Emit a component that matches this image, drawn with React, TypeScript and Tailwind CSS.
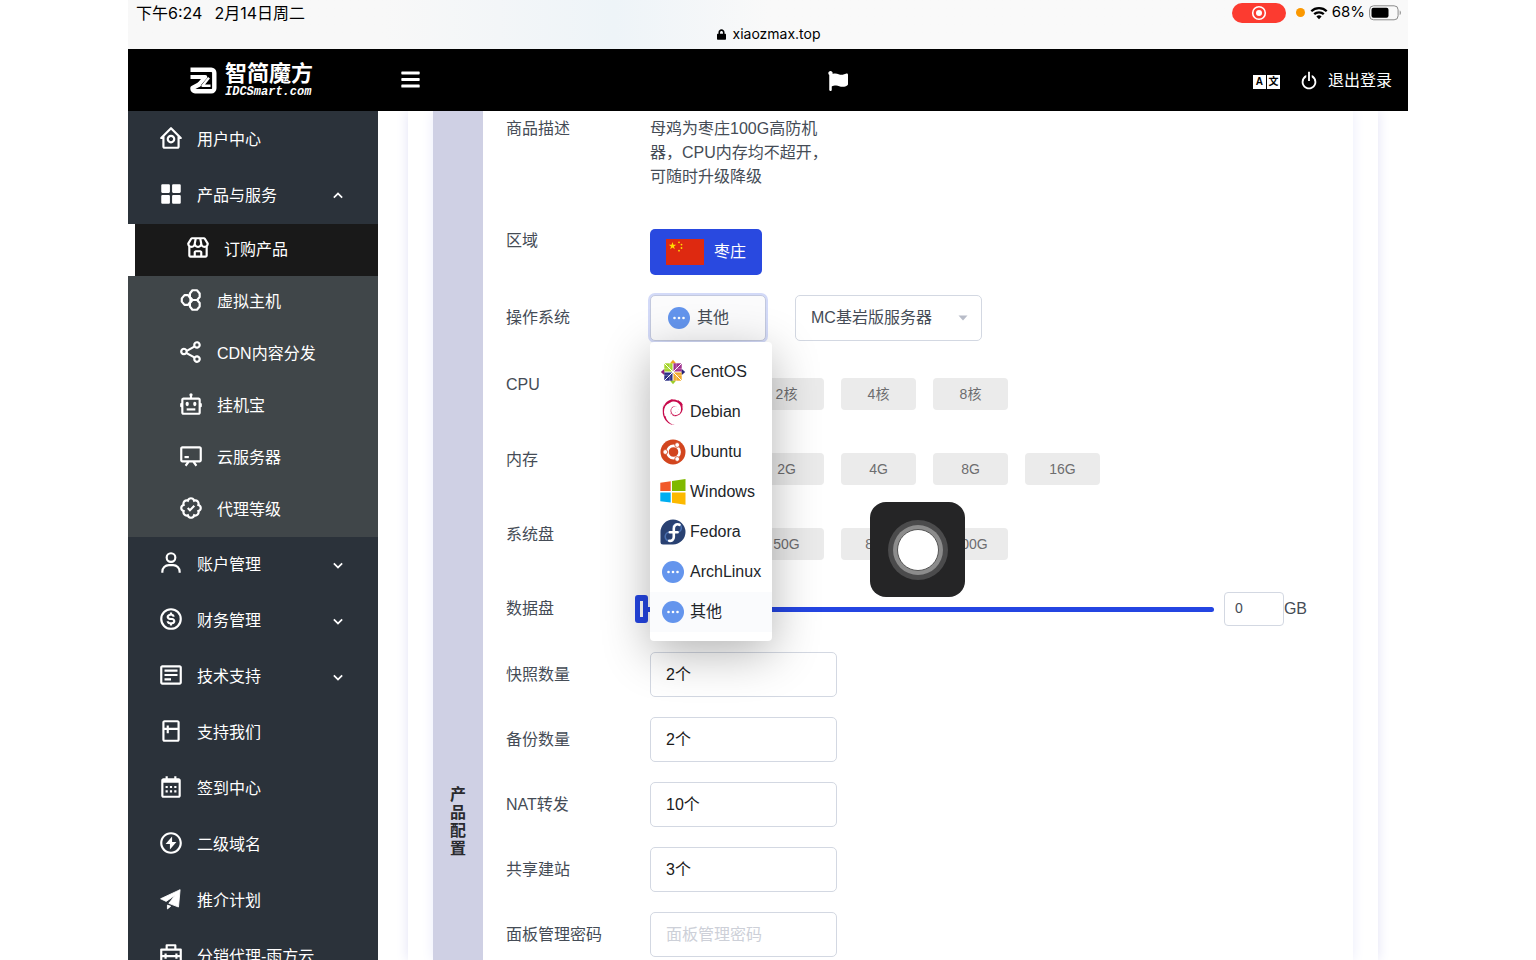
import React from 'react';
import {
  BiBadgeCheck,
  BiBoltCircle,
  BiBot,
  BiCalendar,
  BiChalkboard,
  BiChevronDown,
  BiChevronUp,
  BiDetail,
  BiDollarCircle,
  BiFridge,
  BiHomeCircle,
  BiPowerOff,
  BiShareAlt,
  BiSolidGridAlt,
  BiStore,
  BiUser,
} from 'react-icons/bi';
import { FaBars, FaLock, FaFlag } from 'react-icons/fa';
import { SiDebian } from 'react-icons/si';

const fontStack = "font-['Liberation_Sans','Noto_Sans_CJK_SC',sans-serif]";

function HiveIcon({ className }: { className?: string }) {
  return (
    <svg viewBox="0 0 24 24" className={className} fill="none" stroke="currentColor" strokeWidth="2" strokeLinejoin="round">
      <path d="M13.300 3h4.200L20 6v3.200L17.600 12h-4.200L11 9.200V6z" />
      <path d="M13.400 12h4.200L20 14.800V18l-2.500 3h-4.200L11 18v-3.200z" />
      <path d="M6 7.500h3.300L11.500 10.500v3l-2.200 3H6L3.500 13.500v-3z" />
    </svg>
  );
}

function PlaneIcon({ className }: { className?: string }) {
  return (
    <svg viewBox="0 0 24 24" className={className} fill="currentColor" stroke="currentColor" strokeWidth=".8" strokeLinejoin="round">
      <path d="M2.400 11.800L20.400 3.400 18.900 19.400 10 16l5.800-7.400-8.300 5.600z" />
      <path d="M8.700 17.600v3.600l3-2.500z" />
    </svg>
  );
}

function BriefcaseIcon({ className }: { className?: string }) {
  return (
    <svg viewBox="0 0 24 24" className={className} fill="none" stroke="currentColor" strokeWidth="2" strokeLinejoin="round">
      <path d="M3 7h18v13H3zM8 7V3h8v4M3 13h18M7 10.500v5M17 10.500v5" />
    </svg>
  );
}

function LogoMark() {
  return (
    <svg viewBox="0 0 27 27" className="w-[27px] h-[27px]" fill="none" stroke="#fff" strokeLinejoin="round">
      <path d="M.5 2.700h20.800a3 3 0 0 1 3 3v15.600a3 3 0 0 1-3 3H5a2.500 2.500 0 0 1-2.500-2.500v-.8l7.500-4" strokeWidth="4.400" />
      <path d="M.5 10h14.800L8 18.500" strokeWidth="4" />
      <path d="M20.500 18.700h-8l6.500-8" strokeWidth="2.400" />
    </svg>
  );
}

function CentosIcon() {
  return (
    <svg viewBox="0 0 26 26" className="w-[26px] h-[26px] shrink-0">
      <path d="M13 .8l3.200 3.700h-6.400z" fill="#efa724" />
      <path d="M25.200 13l-3.700 3.200V9.800z" fill="#262577" />
      <path d="M13 25.200l-3.200-3.700h6.400z" fill="#9ccd2a" />
      <path d="M.8 13l3.700-3.200v6.400z" fill="#932279" />
      <path d="M4.300 4.300h8.200v8.200H4.300z" fill="#a5d52a" />
      <path d="M13.500 4.300h8.200v8.200h-8.200z" fill="#a0308f" />
      <path d="M4.300 13.500h8.200v8.200H4.300z" fill="#2c2f86" />
      <path d="M13.500 13.500h8.200v8.200h-8.200z" fill="#f0a92b" />
      <path d="M4 4l18 18M22 4L4 22" stroke="#fff" strokeWidth="1" />
      <path d="M9.800 4v5.800H4M16.200 4v5.800H22M9.800 22v-5.800H4M16.200 22v-5.800H22" stroke="#fff" strokeOpacity=".45" fill="none" strokeWidth=".7" />
    </svg>
  );
}

function UbuntuIcon() {
  return (
    <svg viewBox="0 0 26 26" className="w-[26px] h-[26px] shrink-0">
      <circle cx="13" cy="13" r="12.500" fill="#d2451e" />
      <circle cx="13.500" cy="13" r="6.100" fill="none" stroke="#fff" strokeWidth="2.600" />
      <circle cx="5.300" cy="13" r="2.400" fill="#fff" stroke="#d2451e" strokeWidth=".8" />
      <circle cx="17.200" cy="6" r="2.400" fill="#fff" stroke="#d2451e" strokeWidth=".8" />
      <circle cx="17.200" cy="20" r="2.400" fill="#fff" stroke="#d2451e" strokeWidth=".8" />
    </svg>
  );
}

function WindowsIcon() {
  return (
    <svg viewBox="0 0 26 26" className="w-[26px] h-[26px] shrink-0">
      <path d="M0.300 3.700L10.700 2.200v9.900H0.300z" fill="#f1592a" />
      <path d="M12 2L25.500 0v12.100H12z" fill="#80b900" />
      <path d="M0.300 13.400h10.400v10.200L0.300 22.200z" fill="#00aef0" />
      <path d="M12 13.400h13.500v12.400L12 23.800z" fill="#fcb900" />
    </svg>
  );
}

function FedoraIcon() {
  return (
    <svg viewBox="0 0 26 26" className="w-[26px] h-[26px] shrink-0">
      <path d="M13 .5A12.500 12.500 0 0 0 .5 13v10a2.500 2.500 0 0 0 2.500 2.500h10A12.500 12.500 0 0 0 13 .5z" fill="#294172" />
      <path d="M12 13.300H9.500a4.300 4.300 0 1 0 4.300 4.400v-4.400h3a4.300 4.300 0 1 0-4-5" fill="none" stroke="#4a70b0" strokeWidth="1.600" />
      <path d="M19.500 5.800c-2.800-1.300-5.700 0-5.700 3.600v8.600c0 2.800-2.200 4.200-4.600 3.800M9.800 13.300h7.800" fill="none" stroke="#fff" strokeWidth="2.600" strokeLinecap="round" />
    </svg>
  );
}

function DotsIcon() {
  return (
    <svg viewBox="0 0 26 26" className="w-[26px] h-[26px] shrink-0">
      <circle cx="13" cy="13" r="11" fill="#6495ed" />
      <circle cx="8.500" cy="13" r="1.300" fill="#fff" />
      <circle cx="13" cy="13" r="1.300" fill="#fff" />
      <circle cx="17.500" cy="13" r="1.300" fill="#fff" />
    </svg>
  );
}

function FlagCN() {
  const star = 'M0-3l.7 2.100h2.200L1.100.4l.7 2.100L0 1.200l-1.800 1.300.7-2.100-1.800-1.300h2.200z';
  return (
    <svg viewBox="0 0 38 26" className="w-[38px] h-[26px]">
      <path d="M0 0h38v26H0z" fill="#de2910" />
      <g fill="#ffde00">
        <path d={star} transform="translate(6.500 7) scale(1.300)" />
        <circle cx="13" cy="3.300" r=".9" />
        <circle cx="15.500" cy="5.600" r=".9" />
        <circle cx="15.500" cy="9" r=".9" />
        <circle cx="13" cy="11.700" r=".9" />
      </g>
    </svg>
  );
}

const subMenu = [
  { label: '订购产品', icon: BiStore, active: true },
  { label: '虚拟主机', icon: HiveIcon },
  { label: 'CDN内容分发', icon: BiShareAlt },
  { label: '挂机宝', icon: BiBot },
  { label: '云服务器', icon: BiChalkboard },
  { label: '代理等级', icon: BiBadgeCheck },
];

const mainMenu = [
  { label: '账户管理', icon: BiUser, more: true },
  { label: '财务管理', icon: BiDollarCircle, more: true },
  { label: '技术支持', icon: BiDetail, more: true },
  { label: '支持我们', icon: BiFridge },
  { label: '签到中心', icon: BiCalendar },
  { label: '二级域名', icon: BiBoltCircle },
  { label: '推介计划', icon: PlaneIcon },
  { label: '分销代理-雨方云', icon: BriefcaseIcon },
];

const systems = [
  { label: 'CentOS', icon: <CentosIcon /> },
  { label: 'Debian', icon: <SiDebian className="w-[26px] h-[26px] shrink-0 text-[#c70a4b]" /> },
  { label: 'Ubuntu', icon: <UbuntuIcon /> },
  { label: 'Windows', icon: <WindowsIcon /> },
  { label: 'Fedora', icon: <FedoraIcon /> },
  { label: 'ArchLinux', icon: <DotsIcon /> },
  { label: '其他', icon: <DotsIcon />, active: true },
];

const options = [
  { label: 'CPU', values: ['1核', '2核', '4核', '8核'] },
  { label: '内存', values: ['1G', '2G', '4G', '8G', '16G'] },
  { label: '系统盘', values: ['30G', '50G', '80G', '100G'] },
];

const fields = [
  { id: 'snapshot', label: '快照数量', value: '2个' },
  { id: 'backup', label: '备份数量', value: '2个' },
  { id: 'nat', label: 'NAT转发', value: '10个' },
  { id: 'site', label: '共享建站', value: '3个' },
];

function StatusBar() {
  return (
    <div className="h-[49px] shrink-0 bg-linear-to-r from-[#f8f8f8] from-20% via-[#eef4f8] via-38% to-[#f9f9f9] to-50% text-black font-[Inter,'Noto_Sans_CJK_SC',sans-serif]">
      <div className="flex h-[25px] items-center justify-between pl-2 pr-[6px] text-[15px]">
        <div className="flex gap-3 text-base">
          <span>下午6:24</span>
          <span>2月14日周二</span>
        </div>
        <div className="flex items-center">
          <span className="flex h-5 w-[54px] items-center justify-center rounded-full bg-[#fc3b30]">
            <svg viewBox="0 0 16 16" className="w-4 h-4" fill="none" stroke="#fff">
              <circle cx="8" cy="8" r="6.300" strokeWidth="1.600" />
              <circle cx="8" cy="8" r="3" fill="#fff" stroke="none" />
            </svg>
          </span>
          <span className="ml-[10px] h-[9px] w-[9px] rounded-full bg-[#fb9800]" />
          <svg viewBox="0 0 18 14" className="ml-[5px] w-[18px] h-[14px]" fill="none" stroke="#000" strokeWidth="2.300">
            <path d="M1.300 5.200a11 11 0 0 1 15.400 0M4.200 8.200a7 7 0 0 1 9.600 0" />
            <path d="M9 13.200l-2.600-2.700a3.900 3.900 0 0 1 5.200 0z" fill="#000" stroke="none" />
          </svg>
          <span className="ml-1">68%</span>
          <svg viewBox="0 0 33 16" className="ml-1 w-[33px] h-4">
            <rect x=".6" y=".8" width="28.500" height="14" rx="4" fill="none" stroke="#8b8b8b" />
            <rect x="2.500" y="2.800" width="17" height="10" rx="2" fill="#000" />
            <path d="M30.700 5.500v4.600c1.600-.6 1.600-4 0-4.600z" fill="#8b8b8b" />
          </svg>
        </div>
      </div>
      <div className="flex h-[18px] items-center justify-center gap-[6px] pl-[2px] text-sm">
        <FaLock className="h-[11px] w-[9px]" />
        <span>xiaozmax.top</span>
      </div>
    </div>
  );
}

function TopBar() {
  return (
    <header className="flex h-[62px] shrink-0 items-center bg-black pl-[62px] pr-4 text-white">
      <a href="#" className="flex items-center gap-2">
        <LogoMark />
        <span className="flex flex-col">
          <span className="text-[22px] leading-6 font-bold">智简魔方</span>
          <span className="font-['Liberation_Mono',monospace] text-xs leading-3 font-bold italic">IDCSmart.com</span>
        </span>
      </a>
      <button type="button" aria-label="菜单" className="ml-[87px] pb-[2px]">
        <FaBars className="h-[21px] w-[21px]" />
      </button>
      <div className="flex flex-1 justify-center pl-[2px] pt-[2px]">
        <FaFlag className="h-5 w-5" />
      </div>
      <button type="button" aria-label="语言" className="mt-1 flex gap-px text-[10px] leading-[14px] font-bold text-black">
        <span className="w-[13px] bg-white text-center">A</span>
        <span className="w-[13px] bg-white text-center">文</span>
      </button>
      <a href="#" className="ml-[18px] mt-[2px] flex items-center gap-2">
        <BiPowerOff className="h-[22px] w-[22px]" />
        <span>退出登录</span>
      </a>
    </header>
  );
}

function Sidebar() {
  return (
    <nav className="w-[250px] shrink-0 overflow-hidden bg-[#2b323a] pt-px text-white">
      <a href="#" className="flex h-14 items-center gap-[13px] pl-[30px]">
        <BiHomeCircle className="mb-1 h-[26px] w-[26px]" />
        用户中心
      </a>
      <a href="#" className="flex h-14 items-center gap-[13px] pl-[30px] pr-[30px]">
        <BiSolidGridAlt className="mb-1 h-[26px] w-[26px]" />
        <span className="flex-1">产品与服务</span>
        <BiChevronUp className="h-5 w-5" />
      </a>
      {/* 二级菜单 */}
      <ul className="bg-[#404649] pb-px">
        {subMenu.map(({ label, icon: Icon, active }) => (
          <li key={label}>
            <a
              href="#"
              className={`flex h-[52px] items-center gap-[13px] pl-[50px] ${active ? 'border-l-[7px] border-white bg-[#191919]' : ''}`}
            >
              <Icon className="mb-1 h-[26px] w-[26px]" />
              {label}
            </a>
          </li>
        ))}
      </ul>
      {mainMenu.map(({ label, icon: Icon, more }) => (
        <a key={label} href="#" className="flex h-14 items-center gap-[13px] pl-[30px] pr-[30px]">
          <Icon className="mb-1 h-[26px] w-[26px]" />
          <span className="flex-1">{label}</span>
          {more && <BiChevronDown className="h-5 w-5" />}
        </a>
      ))}
    </nav>
  );
}

function SystemPicker() {
  return (
    <div className="relative">
      <button
        type="button"
        className="flex h-[46px] w-[116px] items-center gap-[5px] rounded-[5px] border border-[#c3c9de] bg-[#fbfbfc] pl-[15px] ring-2 ring-[#d3daf8]"
      >
        <DotsIcon />
        其他
      </button>
      <ul className="absolute left-0 top-[47px] z-10 w-[122px] rounded-[4px] bg-white pt-[10px] pb-[9px] text-[#212529] shadow-[0_12px_48px_rgba(0,0,0,0.3)]">
        {systems.map(({ label, icon, active }) => (
          <li key={label}>
            <a href="#" className={`flex h-10 items-center gap-1 pl-[10px] ${active ? 'bg-[#fafbfd]' : ''}`}>
              {icon}
              {label}
            </a>
          </li>
        ))}
      </ul>
    </div>
  );
}

function ProductForm() {
  return (
    <form className="flex flex-1 flex-col gap-5 bg-white pl-[23px] pt-[6px] pr-[46px]">
      <div className="flex pb-5">
        <span className="w-36 shrink-0">商品描述</span>
        <p className="w-[180px] leading-6">母鸡为枣庄100G高防机器，CPU内存均不超开，可随时升级降级</p>
      </div>
      <div className="flex">
        <span className="w-36 shrink-0">区域</span>
        <button type="button" className="flex h-[46px] items-center gap-[10px] rounded-[5px] bg-[#2949e0] px-4 text-white">
          <FlagCN />
          枣庄
        </button>
      </div>
      <div className="flex items-center">
        <label htmlFor="os" className="w-36 shrink-0">操作系统</label>
        <SystemPicker />
        <div className="relative ml-[29px]">
          <select
            id="os"
            className="h-[46px] w-[187px] appearance-none rounded-[5px] border border-[#d3d8e2] bg-white pl-[15px]"
          >
            <option>MC基岩版服务器</option>
          </select>
          <svg viewBox="0 0 10 6" className="pointer-events-none absolute right-[14px] top-5 h-[6px] w-[10px]">
            <path d="M.5.5h9L5 5.500z" fill="#b8bcc8" />
          </svg>
        </div>
      </div>
      {options.map(({ label, values }) => (
        <div key={label} className="flex h-[55px]">
          <span className="w-36 shrink-0 pt-3">{label}</span>
          <div className="flex gap-[17px] pl-[7px] pt-[17px]">
            {values.map((value) => (
              <button key={value} type="button" className="h-8 w-[75px] rounded-[4px] bg-[#ebebeb] text-sm text-[#6d6d6f]">
                {value}
              </button>
            ))}
          </div>
        </div>
      ))}
      <div className="flex h-[46px] items-center">
        <label htmlFor="disk" className="w-[129px] shrink-0">数据盘</label>
        <input
          id="disk"
          type="range"
          min="0"
          max="100"
          defaultValue="0"
          className="h-7 min-w-0 flex-1 appearance-none bg-transparent [&::-webkit-slider-runnable-track]:h-[5px] [&::-webkit-slider-runnable-track]:rounded-full [&::-webkit-slider-runnable-track]:bg-[#2445e2] [&::-webkit-slider-thumb]:-mt-3 [&::-webkit-slider-thumb]:h-7 [&::-webkit-slider-thumb]:w-[13px] [&::-webkit-slider-thumb]:appearance-none [&::-webkit-slider-thumb]:rounded-[3px] [&::-webkit-slider-thumb]:border-x-[5px] [&::-webkit-slider-thumb]:border-y-[6px] [&::-webkit-slider-thumb]:border-solid [&::-webkit-slider-thumb]:border-[#2445e2] [&::-webkit-slider-thumb]:bg-white"
        />
        <input
          type="text"
          aria-label="数据盘容量"
          defaultValue="0"
          className="ml-[10px] h-[34px] w-[60px] rounded-[4px] border border-[#d3d8e2] pb-[2px] pl-[10px] text-sm"
        />
        <span>GB</span>
      </div>
      {fields.map(({ id, label, value }) => (
        <div key={id} className="flex h-[45px] items-center">
          <label htmlFor={id} className="w-36 shrink-0">{label}</label>
          <input
            id={id}
            type="text"
            defaultValue={value}
            className="h-full w-[187px] rounded-[5px] border border-[#d3d8e2] bg-transparent px-[15px] pb-1 text-[#1b1b1b]"
          />
        </div>
      ))}
      <div className="flex h-[45px] items-center">
        <label htmlFor="panel-password" className="w-36 shrink-0">面板管理密码</label>
        <input
          id="panel-password"
          type="password"
          placeholder="面板管理密码"
          className="h-full w-[187px] rounded-[5px] border border-[#d3d8e2] px-[15px] placeholder:text-[#cdd0d8]"
        />
      </div>
    </form>
  );
}

export default function App() {
  return (
    <div className={`h-screen overflow-hidden bg-white px-32 text-base ${fontStack}`}>
      <div className="relative flex h-full flex-col overflow-hidden">
        <StatusBar />
        <TopBar />
        <div className="flex min-h-0 flex-1">
          <Sidebar />
          <main className="min-w-0 flex-1 overflow-hidden px-[30px] text-[#454c56]">
            <div className="h-full px-[25px] shadow-[0_0_12px_#e2e2f5]">
              <div className="flex h-full shadow-[0_0_12px_#eaebfa]">
                <div className="flex w-[50px] shrink-0 justify-center bg-[#cfd0e4] pt-[675px]">
                  <h2 className="w-4 leading-[18px] font-bold text-[#2a2a2e]">产品配置</h2>
                </div>
                <ProductForm />
              </div>
            </div>
          </main>
        </div>
        {/* 悬浮球 */}
        <button
          type="button"
          aria-label="辅助触控"
          className="absolute left-[742px] top-[502px] z-20 flex h-[95px] w-[95px] items-center justify-center rounded-2xl bg-[#252526]"
        >
          <span className="flex h-[60px] w-[60px] items-center justify-center rounded-full bg-[#4b4b4c]">
            <span className="flex h-[50px] w-[50px] items-center justify-center rounded-full bg-[#8c8c8c]">
              <span className="h-[42px] w-[42px] rounded-full border border-[#555] bg-white" />
            </span>
          </span>
        </button>
      </div>
    </div>
  );
}
